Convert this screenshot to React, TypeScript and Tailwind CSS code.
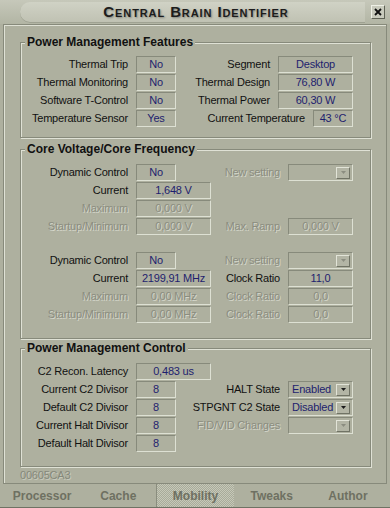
import React from 'react';

const NAVY = 'text-[#1e1e6e]';
const OFF = 'text-[#8b8d80] [text-shadow:1px_1px_0_#d4d6ca]';
const SUNKEN = 'border border-t-[#878a7b] border-l-[#878a7b] border-b-[#dde0d3] border-r-[#dde0d3]';

function Box({ children, w = 'w-[40px]', off = false }: { children?: React.ReactNode; w?: string; off?: boolean }) {
    return (
        <div className={`${w} h-[17px] flex items-center justify-center ${SUNKEN} ${off ? OFF : NAVY}`}>
            {children}
        </div>
    );
}

function Combo({ value, off = false }: { value?: string; off?: boolean }) {
    return (
        <div className={`w-[65px] h-[17px] flex items-center pl-[3px] pr-[2px] ${SUNKEN}`}>
            <span className={`flex-1 ${NAVY}`}>{value}</span>
            <span className="w-[14px] h-[12px] flex items-center justify-center bg-[#b3b5a5] border border-t-[#e2e4d8] border-l-[#e2e4d8] border-b-[#707365] border-r-[#707365]">
                <svg width="5" height="3" viewBox="0 0 5 3">
                    <path d="M0 0h5L2.5 3z" fill={off ? '#8b8d80' : '#1a1a1a'} />
                </svg>
            </span>
        </div>
    );
}

function Label({ children, off = false, className = '' }: { children: React.ReactNode; off?: boolean; className?: string }) {
    return (
        <span className={`h-[17px] leading-[17px] text-right whitespace-nowrap ${off ? OFF : 'text-[#111]'} ${className}`}>
            {children}
        </span>
    );
}

function Row({ label, labelOff, value, valueW, valueOff, right }: {
    label: string;
    labelOff?: boolean;
    value: string;
    valueW?: string;
    valueOff?: boolean;
    right?: React.ReactNode;
}) {
    return (
        <div className="flex h-[18px] items-start">
            <Label off={labelOff} className="w-[107px]">{label}</Label>
            <div className="ml-[8px]">
                <Box w={valueW} off={valueOff}>{value}</Box>
            </div>
            {right && <div className="ml-auto flex items-start gap-[8px] pr-[17px]">{right}</div>}
        </div>
    );
}

function Group({ title, className = '', children }: { title: string; className?: string; children: React.ReactNode }) {
    return (
        <div className={`ml-[16px] w-[351px] border border-[#878a7b] shadow-[inset_1px_1px_0_#dfe1d5,1px_1px_0_#dfe1d5] ${className}`}>
            <div className="-mt-[8px] ml-[4px] w-fit bg-[#aeb09f] px-[2px] text-[12px] font-bold leading-[14px] text-[#111] tracking-normal">
                {title}
            </div>
            {children}
        </div>
    );
}

const tabs = ['Processor', 'Cache', 'Mobility', 'Tweaks', 'Author'];

export default function App() {
    return (
        <div className="w-[390px] h-[508px] overflow-hidden bg-[#aeb09f] font-['Liberation_Sans',Arial,sans-serif] text-[11px] tracking-[-0.2px] select-none">
            {/* Title bar */}
            <div className="flex h-[24px] items-center bg-[linear-gradient(#c6c8ba,#b2b5a4)] pl-[20px]">
                <div className="flex h-[21px] flex-1 items-center justify-center rounded-l-[10px] bg-[linear-gradient(#d0d2c5,#bfc1b2)] pl-[7px] shadow-[inset_0_-1px_0_#9fa292]">
                    <span className="text-[15px] font-bold [font-variant:small-caps] tracking-[0.9px] text-[#1c1c1c] [text-shadow:1px_1px_2px_rgba(0,0,0,0.35)]">
                        Central Brain Identifier
                    </span>
                </div>
                <div className="ml-[6px] mr-[5px] flex h-[14px] w-[14px] items-center justify-center border border-t-[#eef0e6] border-l-[#eef0e6] border-b-[#5f6255] border-r-[#5f6255] bg-[#c9cbbd]">
                    <svg width="8" height="8" viewBox="0 0 8 8">
                        <path d="M1 1l6 6M7 1L1 7" stroke="#111" strokeWidth="1.8" />
                    </svg>
                </div>
            </div>

            {/* Main panel */}
            <div className="mx-[3px] flex h-[460px] flex-col border border-[#878a7b] shadow-[inset_1px_1px_0_#dfe1d5]">
                <Group title="Power Management Features" className="mt-[17px] pb-[9px]">
                    <div className="mt-[7px]">
                        <Row label="Thermal Trip" value="No" right={<><Label>Segment</Label><Box w="w-[75px]">Desktop</Box></>} />
                        <Row label="Thermal Monitoring" value="No" right={<><Label>Thermal Design</Label><Box w="w-[75px]">76,80 W</Box></>} />
                        <Row label="Software T-Control" value="No" right={<><Label>Thermal Power</Label><Box w="w-[75px]">60,30 W</Box></>} />
                        <Row label="Temperature Sensor" value="Yes" right={<><Label>Current Temperature</Label><Box w="w-[40px]">43 °C</Box></>} />
                    </div>
                </Group>

                <Group title="Core Voltage/Core Frequency" className="mt-[11px] pb-[14px]">
                    <div className="mt-[8px]">
                        <Row label="Dynamic Control" value="No" right={<><Label off>New setting</Label><Combo off /></>} />
                        <Row label="Current" value="1,648 V" valueW="w-[75px]" />
                        <Row label="Maximum" labelOff value="0,000 V" valueW="w-[75px]" valueOff />
                        <Row label="Startup/Minimum" labelOff value="0,000 V" valueW="w-[75px]" valueOff right={<><Label off>Max. Ramp</Label><Box w="w-[65px]" off>0,000 V</Box></>} />
                    </div>
                    <div className="mt-[16px]">
                        <Row label="Dynamic Control" value="No" right={<><Label off>New setting</Label><Combo off /></>} />
                        <Row label="Current" value="2199,91 MHz" valueW="w-[75px]" right={<><Label>Clock Ratio</Label><Box w="w-[65px]">11,0</Box></>} />
                        <Row label="Maximum" labelOff value="0,00 MHz" valueW="w-[75px]" valueOff right={<><Label off>Clock Ratio</Label><Box w="w-[65px]" off>0,0</Box></>} />
                        <Row label="Startup/Minimum" labelOff value="0,00 MHz" valueW="w-[75px]" valueOff right={<><Label off>Clock Ratio</Label><Box w="w-[65px]" off>0,0</Box></>} />
                    </div>
                </Group>

                <Group title="Power Management Control" className="mt-[9px] pb-[13px]">
                    <div className="mt-[8px]">
                        <Row label="C2 Recon. Latency" value="0,483 us" valueW="w-[75px]" />
                        <Row label="Current C2 Divisor" value="8" right={<><Label>HALT State</Label><Combo value="Enabled" /></>} />
                        <Row label="Default C2 Divisor" value="8" right={<><Label>STPGNT C2 State</Label><Combo value="Disabled" /></>} />
                        <Row label="Current Halt Divisor" value="8" right={<><Label off>FID/VID Changes</Label><Combo off /></>} />
                        <Row label="Default Halt Divisor" value="8" />
                    </div>
                </Group>

                <div className="ml-[16px] h-[16px] leading-[16px] text-[#85887a] [text-shadow:1px_1px_0_#c8cabd]">00605CA3</div>
            </div>

            {/* Tabs */}
            <div className="flex h-[24px] px-[4px] border-b border-[#6f7264]">
                {tabs.map((t) => (
                    <div
                        key={t}
                        className={`flex flex-1 items-center justify-center text-[12px] font-bold tracking-normal text-[#6e7062] ${t === 'Mobility'
                            ? 'border-l border-[#8a8d7e] [background-image:repeating-conic-gradient(#c6c8b8_0_25%,#a8ab9a_0_50%)] [background-size:2px_2px]'
                            : ''
                            }`}
                    >
                        {t}
                    </div>
                ))}
            </div>
        </div>
    );
}
